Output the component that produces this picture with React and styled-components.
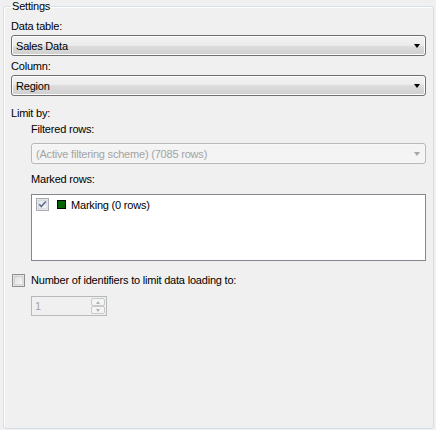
import styled, { createGlobalStyle } from "styled-components"

const GlobalStyle = createGlobalStyle`
body {
  margin: 0;
  background: #f0f0f0;
  font-family: "Liberation Sans", Arial, sans-serif;
  font-size: 11px;
  letter-spacing: -0.2px;
  color: #000;
}
`

const Page = styled.div`
  padding: 0 2px 0 3px;
`

const GroupBox = styled.fieldset`
  margin: 0;
  padding: 0 7px;
  min-width: 0;
  height: 429px;
  box-sizing: border-box;
  border: 1px solid #d5dfe5;
  border-radius: 3px;
  box-shadow: inset 1px 1px 0 #fff;
`

const Legend = styled.legend`
  padding: 0 1px;
  line-height: 13px;
`

const Label = styled.div`
  line-height: 13px;
  margin-top: ${(p) => p.$top || 0}px;
  margin-left: ${(p) => (p.$indent ? 20 : 0)}px;
`

const Combo = styled.div`
  height: 21px;
  box-sizing: border-box;
  margin-top: ${(p) => p.$top || 0}px;
  margin-left: ${(p) => (p.$indent ? 20 : 0)}px;
  display: flex;
  align-items: center;
  justify-content: space-between;
  padding: 0 4px 0 4px;
  border: 1px solid ${(p) => (p.$disabled ? "#b4b9bc" : "#707070")};
  border-radius: 3px;
  color: ${(p) => (p.$disabled ? "#a3a3a3" : "#000")};
  background: ${(p) =>
    p.$disabled
      ? "#f4f4f4"
      : "linear-gradient(#f2f2f2 0%, #ebebeb 50%, #dddddd 50%, #cfcfcf 100%)"};
  box-shadow: inset 0 0 0 1px ${(p) => (p.$disabled ? "#f7f7f7" : "#fcfcfc")};
`

const Arrow = styled.span`
  width: 0;
  height: 0;
  border-left: 3.5px solid transparent;
  border-right: 3.5px solid transparent;
  border-top: 4px solid ${(p) => (p.$disabled ? "#a6a6a6" : "#000")};
  margin-right: 1px;
`

const ListBox = styled.div`
  height: 67px;
  box-sizing: border-box;
  margin: 8px 0 0 20px;
  padding: 3px 4px;
  border: 1px solid #828790;
  background: #fff;
`

const ListItem = styled.div`
  display: flex;
  align-items: center;
  height: 13px;
`

const Swatch = styled.span`
  width: 9px;
  height: 9px;
  box-sizing: border-box;
  margin: 0 5px 0 8px;
  background: #006400;
  border: 1px solid #000;
`

const CheckRow = styled.div`
  display: flex;
  align-items: center;
  margin-top: 13px;
  margin-left: 1px;
  line-height: 13px;
  gap: 6px;
`

const SpinBox = styled.div`
  width: 76px;
  height: 20px;
  box-sizing: border-box;
  margin: 9px 0 0 20px;
  display: flex;
  align-items: center;
  justify-content: space-between;
  padding: 1px 1px 1px 3px;
  border: 1px solid #b4b9bc;
  color: #a3a3a3;
`

const SpinButtons = styled.div`
  width: 14px;
  height: 16px;
  display: flex;
  flex-direction: column;
`

const SpinButton = styled.div`
  flex: 1;
  display: flex;
  align-items: center;
  justify-content: center;
  border: 1px solid #c9c9c9;
  border-radius: 2px;
  background: #f4f4f4;
`

const TinyArrow = styled.span`
  width: 0;
  height: 0;
  border-left: 2.5px solid transparent;
  border-right: 2.5px solid transparent;
  ${(p) => (p.$up ? "border-bottom" : "border-top")}: 3px solid #b0b0b0;
`

function CheckBox({ checked }) {
  return (
    <svg width="13" height="13" viewBox="0 0 13 13">
      <defs>
        <linearGradient id={checked ? "cbOn" : "cbOff"} x1="0" y1="0" x2="1" y2="1">
          <stop offset="0" stopColor={checked ? "#e4e6ea" : "#dcdcdc"} />
          <stop offset="1" stopColor={checked ? "#f6f6f6" : "#fafafa"} />
        </linearGradient>
      </defs>
      <rect x="0.5" y="0.5" width="12" height="12" fill="#fff" stroke={checked ? "#a8abb0" : "#8f8f8f"} />
      <rect x="2" y="2" width="9" height="9" fill={`url(#${checked ? "cbOn" : "cbOff"})`} stroke={checked ? "#c8cbd0" : "#c2c2c2"} strokeWidth="1" />
      {checked && (
        <path d="M3.2 6.3 L5.3 8.6 L9.8 3.4" fill="none" stroke="#5b6e95" strokeWidth="1.6" />
      )}
    </svg>
  )
}

function App() {
  return (
    <Page>
      <GlobalStyle />
      <GroupBox>
        <Legend>Settings</Legend>
        <Label $top={7}>Data table:</Label>
        <Combo $top={2}>
          Sales Data
          <Arrow />
        </Combo>
        <Label $top={4}>Column:</Label>
        <Combo $top={2}>
          Region
          <Arrow />
        </Combo>
        <Label $top={11}>Limit by:</Label>
        <Label $top={3} $indent>Filtered rows:</Label>
        <Combo $top={7} $indent $disabled>
          (Active filtering scheme) (7085 rows)
          <Arrow $disabled />
        </Combo>
        <Label $top={9} $indent>Marked rows:</Label>
        <ListBox>
          <ListItem>
            <CheckBox checked />
            <Swatch />
            Marking (0 rows)
          </ListItem>
        </ListBox>
        <CheckRow>
          <CheckBox />
          Number of identifiers to limit data loading to:
        </CheckRow>
        <SpinBox>
          1
          <SpinButtons>
            <SpinButton>
              <TinyArrow $up />
            </SpinButton>
            <SpinButton>
              <TinyArrow />
            </SpinButton>
          </SpinButtons>
        </SpinBox>
      </GroupBox>
    </Page>
  )
}

export default App
